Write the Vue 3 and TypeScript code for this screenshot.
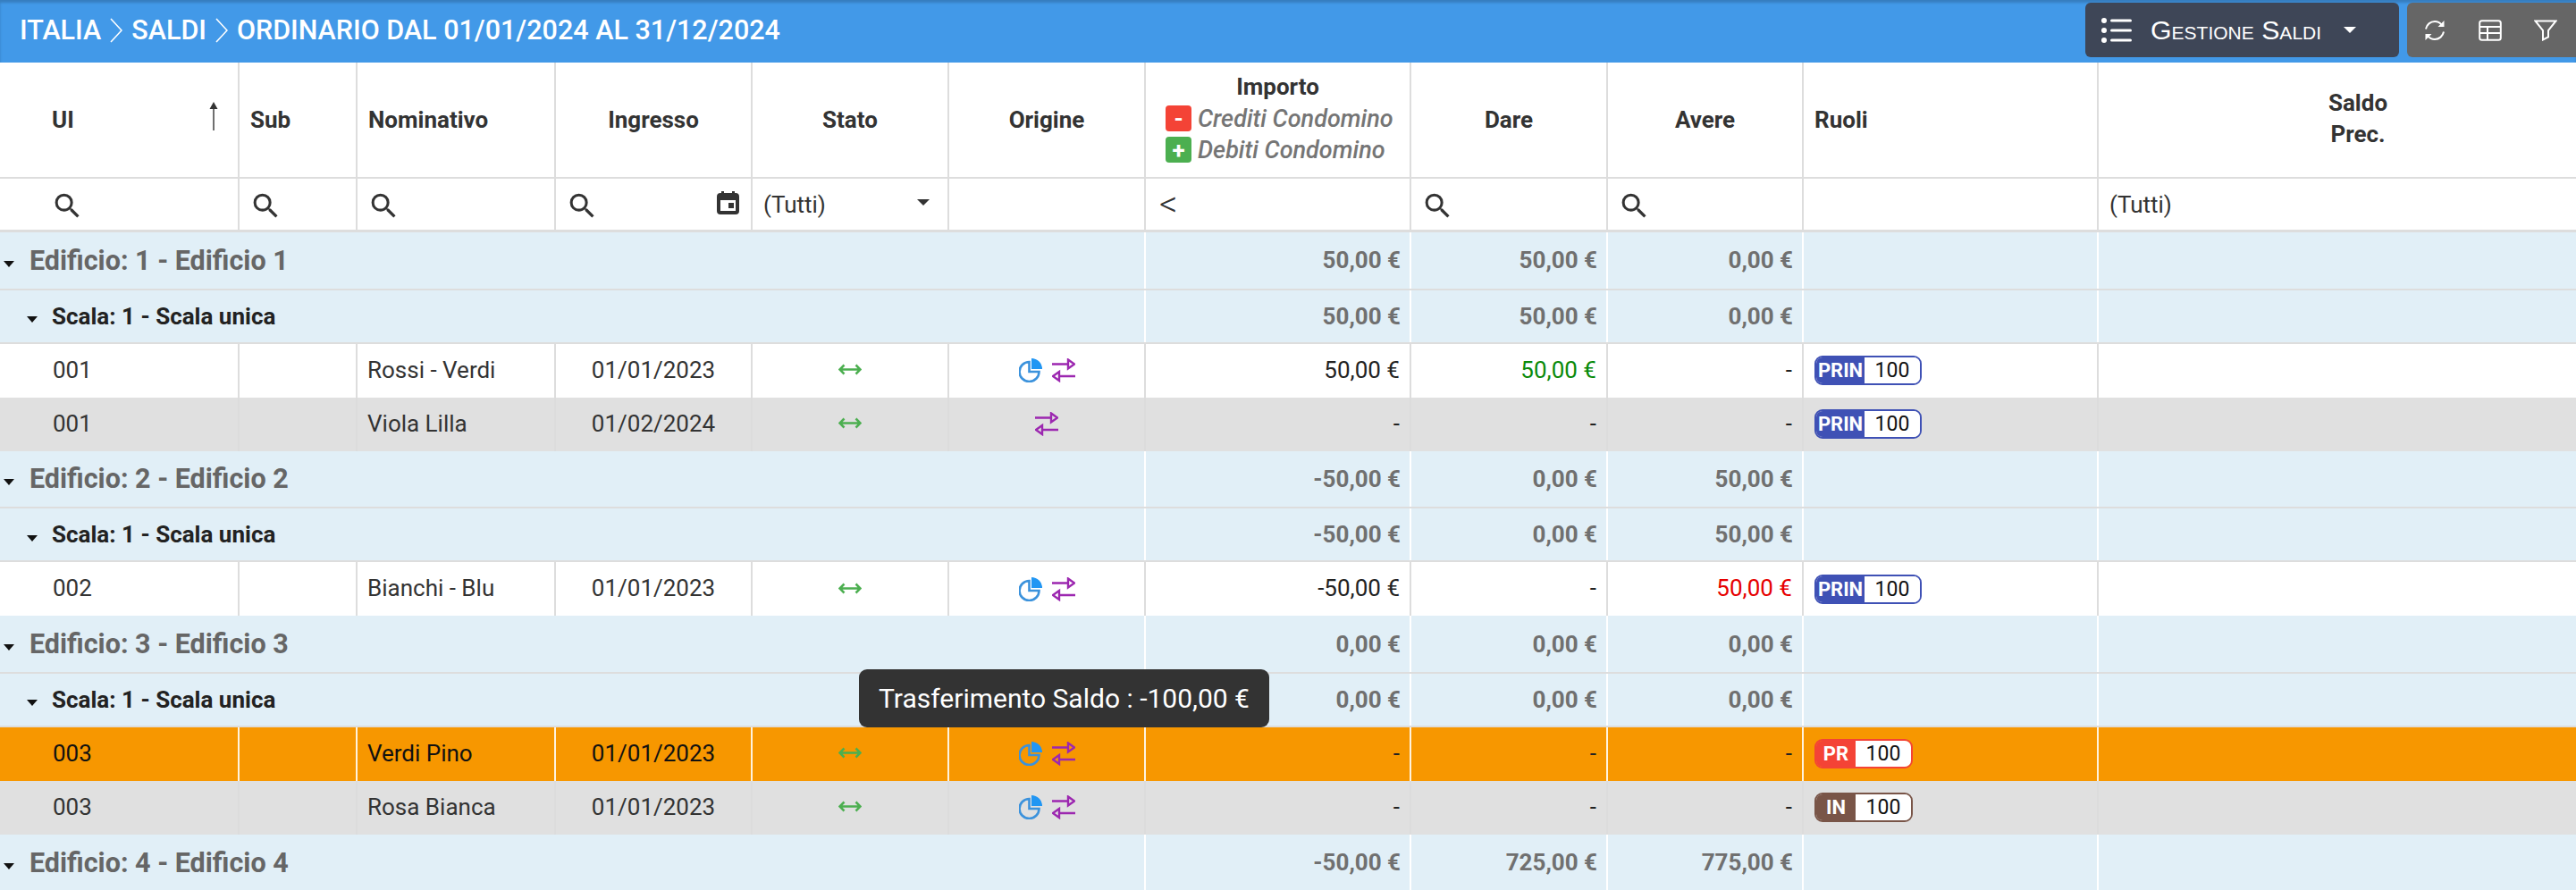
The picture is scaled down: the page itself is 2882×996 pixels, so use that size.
<script setup lang="ts">
type Kind = 'ed' | 'sc' | 'data'
interface Row {
  kind: Kind
  label?: string
  ui?: string
  name?: string
  date?: string
  tone?: 'white' | 'grey' | 'orange'
  pie?: boolean
  imp: string
  dare: string
  avere: string
  dareTone?: string
  avereTone?: string
  role?: string
  roleTone?: string
}

const SEARCH = 'M15.5 14h-.79l-.28-.27A6.471 6.471 0 0 0 16 9.5 6.5 6.5 0 1 0 9.5 16c1.61 0 3.09-.59 4.23-1.57l.27.28v.79l5 4.99L20.49 19l-4.99-5zm-6 0C7.01 14 5 11.99 5 9.5S7.01 5 9.5 5 14 7.01 14 9.5 11.99 14 9.5 14z'

const rows: Row[] = [
  { kind: 'ed', label: 'Edificio: 1 - Edificio 1', imp: '50,00 €', dare: '50,00 €', avere: '0,00 €' },
  { kind: 'sc', label: 'Scala: 1 - Scala unica', imp: '50,00 €', dare: '50,00 €', avere: '0,00 €' },
  { kind: 'data', ui: '001', name: 'Rossi - Verdi', date: '01/01/2023', tone: 'white', pie: true, imp: '50,00 €', dare: '50,00 €', avere: '-', dareTone: 'green', role: 'PRIN', roleTone: 'indigo' },
  { kind: 'data', ui: '001', name: 'Viola Lilla', date: '01/02/2024', tone: 'grey', pie: false, imp: '-', dare: '-', avere: '-', role: 'PRIN', roleTone: 'indigo' },
  { kind: 'ed', label: 'Edificio: 2 - Edificio 2', imp: '-50,00 €', dare: '0,00 €', avere: '50,00 €' },
  { kind: 'sc', label: 'Scala: 1 - Scala unica', imp: '-50,00 €', dare: '0,00 €', avere: '50,00 €' },
  { kind: 'data', ui: '002', name: 'Bianchi - Blu', date: '01/01/2023', tone: 'white', pie: true, imp: '-50,00 €', dare: '-', avere: '50,00 €', avereTone: 'red', role: 'PRIN', roleTone: 'indigo' },
  { kind: 'ed', label: 'Edificio: 3 - Edificio 3', imp: '0,00 €', dare: '0,00 €', avere: '0,00 €' },
  { kind: 'sc', label: 'Scala: 1 - Scala unica', imp: '0,00 €', dare: '0,00 €', avere: '0,00 €' },
  { kind: 'data', ui: '003', name: 'Verdi Pino', date: '01/01/2023', tone: 'orange', pie: true, imp: '-', dare: '-', avere: '-', role: 'PR', roleTone: 'red' },
  { kind: 'data', ui: '003', name: 'Rosa Bianca', date: '01/01/2023', tone: 'grey', pie: true, imp: '-', dare: '-', avere: '-', role: 'IN', roleTone: 'brown' },
  { kind: 'ed', label: 'Edificio: 4 - Edificio 4', imp: '-50,00 €', dare: '725,00 €', avere: '775,00 €' },
]
</script>

<template>
  <div class="page">
    <header class="topbar">
      <div class="crumbs">
        <span>ITALIA</span>
        <svg class="chev" viewBox="0 0 14 28"><path d="M1 1l12 13L1 27" /></svg>
        <span>SALDI</span>
        <svg class="chev" viewBox="0 0 14 28"><path d="M1 1l12 13L1 27" /></svg>
        <span>ORDINARIO DAL 01/01/2024 AL 31/12/2024</span>
      </div>
      <div class="actions">
        <div class="manage">
          <svg class="list-ic" viewBox="0 0 34 28">
            <circle cx="3" cy="3" r="3" /><circle cx="3" cy="14" r="3" /><circle cx="3" cy="25" r="3" />
            <rect x="10" y="1.5" width="24" height="3" rx="1.5" /><rect x="10" y="12.5" width="24" height="3" rx="1.5" /><rect x="10" y="23.5" width="24" height="3" rx="1.5" />
          </svg>
          <span class="manage-text">Gestione Saldi</span>
          <span class="caret-white"></span>
        </div>
        <div class="tools">
          <svg class="tool" viewBox="0 0 26 24">
            <path d="M3 10.5C4 5.5 8 2 13 2c3.200 0 5.800 1.400 7.500 3.600M23 13.500C22 18.500 18 22 13 22c-3.200 0-5.800-1.400-7.500-3.600" />
            <path class="solid" d="M23.500 1v7h-7zM2.500 23v-7h7z" />
          </svg>
          <svg class="tool" viewBox="0 0 26 24">
            <rect x="1.200" y="1.200" width="23.600" height="21.600" rx="2.500" />
            <path d="M1 8h24M1 15h24M10 8v15" />
          </svg>
          <svg class="tool" viewBox="0 0 26 24">
            <path d="M1.500 1.500h23L16 12v7.500l-6 3V12z" />
          </svg>
        </div>
      </div>
    </header>

    <div class="row head">
      <div class="c first-head">UI
        <svg class="sort" viewBox="0 0 10 32"><path d="M5 0l4.500 8h-3.800v24H4.300V8H.5z" /></svg>
      </div>
      <div class="c left">Sub</div>
      <div class="c left">Nominativo</div>
      <div class="c mid">Ingresso</div>
      <div class="c mid">Stato</div>
      <div class="c mid">Origine</div>
      <div class="c importo">
        <div class="imp-title">Importo</div>
        <div class="imp-line"><span class="box box-red">-</span><em>Crediti Condomino</em></div>
        <div class="imp-line"><span class="box box-green">+</span><em>Debiti Condomino</em></div>
      </div>
      <div class="c mid">Dare</div>
      <div class="c mid">Avere</div>
      <div class="c left">Ruoli</div>
      <div class="c mid two">Saldo<br />Prec.</div>
    </div>

    <div class="row filters">
      <div class="c f-ui"><svg class="search" viewBox="0 0 24 24"><path :d="SEARCH" /></svg></div>
      <div class="c f-sm"><svg class="search" viewBox="0 0 24 24"><path :d="SEARCH" /></svg></div>
      <div class="c f-sm"><svg class="search" viewBox="0 0 24 24"><path :d="SEARCH" /></svg></div>
      <div class="c f-sm f-date">
        <svg class="search" viewBox="0 0 24 24"><path :d="SEARCH" /></svg>
        <svg class="cal" viewBox="0 0 25 26">
          <path d="M5 0h3v2h9V0h3v2h1a4 4 0 0 1 4 4v16a4 4 0 0 1-4 4H4a4 4 0 0 1-4-4V6a4 4 0 0 1 4-4h1z" />
          <rect class="cal-in" x="4" y="10" width="17" height="12" /><rect x="13" y="13" width="6" height="6" />
        </svg>
      </div>
      <div class="c f-sel">(Tutti)<span class="caret-dark"></span></div>
      <div class="c"></div>
      <div class="c f-lt">&lt;</div>
      <div class="c f-sm"><svg class="search" viewBox="0 0 24 24"><path :d="SEARCH" /></svg></div>
      <div class="c f-sm"><svg class="search" viewBox="0 0 24 24"><path :d="SEARCH" /></svg></div>
      <div class="c"></div>
      <div class="c f-sel">(Tutti)</div>
    </div>
    <div class="head-rule"></div>

    <template v-for="(r, i) in rows" :key="i">
      <div v-if="r.kind !== 'data'" class="row group" :class="r.kind">
        <div class="c g-label">
          <span class="caret-tiny"></span>
          <span class="g-text">{{ r.label }}</span>
        </div>
        <div class="c g-num">{{ r.imp }}</div>
        <div class="c g-num">{{ r.dare }}</div>
        <div class="c g-num">{{ r.avere }}</div>
        <div class="c"></div>
        <div class="c"></div>
      </div>
      <div v-else class="row data" :class="r.tone">
        <div class="c d-ui">{{ r.ui }}</div>
        <div class="c"></div>
        <div class="c left-d">{{ r.name }}</div>
        <div class="c mid-d">{{ r.date }}</div>
        <div class="c mid-d">
          <svg class="lr" viewBox="0 0 26 13"><path d="M1.500 6.500h23M6.500 1.500l-5 5 5 5M19.500 1.500l5 5-5 5" /></svg>
        </div>
        <div class="c mid-d origin">
          <svg v-if="r.pie" class="pie" viewBox="0 0 26 27">
            <path class="pie-o" d="M11.500 4a11 11 0 1 0 11 11H11.500z" />
            <path class="pie-f" d="M14 0a12 12 0 0 1 12 12H14z" />
          </svg>
          <svg class="swap" viewBox="0 0 26 27">
            <path d="M0 6.500h18M18 1.500l7 5-7 5zM26 20H8M8 15l-7 5 7 5z" />
          </svg>
        </div>
        <div class="c num">{{ r.imp }}</div>
        <div class="c num" :class="r.dareTone">{{ r.dare }}</div>
        <div class="c num" :class="r.avereTone">{{ r.avere }}</div>
        <div class="c chip-cell">
          <div class="chip" :class="r.roleTone">
            <span class="chip-l">{{ r.role }}</span>
            <span class="chip-r">100</span>
          </div>
        </div>
        <div class="c"></div>
      </div>
    </template>

    <div class="tooltip">Trasferimento Saldo : -100,00 €</div>
  </div>
</template>

<style scoped>
.page {
  position: relative;
  width: 2882px;
  height: 996px;
  overflow: hidden;
  background: #fff;
  font-family: Roboto, "Liberation Sans", sans-serif;
  color: #333;
}

.topbar {
  display: flex;
  justify-content: space-between;
  align-items: flex-start;
  height: 70px;
  padding-top: 3px;
  box-sizing: border-box;
  background: #4299e8;
  box-shadow: inset 0 3px 3px rgba(0, 0, 0, 0.18);
}
.crumbs {
  display: flex;
  align-items: center;
  height: 61px;
  padding-left: 22px;
  color: #fff;
  font-size: 30.5px;
  font-weight: 500;
}
.chev {
  width: 14px;
  height: 28px;
  margin: 0 10px;
  fill: none;
  stroke: #fff;
  stroke-width: 1.6;
}
.actions {
  display: flex;
  gap: 9px;
}
.manage {
  display: flex;
  align-items: center;
  width: 351px;
  height: 61px;
  box-sizing: border-box;
  padding-left: 18px;
  background: #3e4657;
  border-radius: 6px;
  color: #fff;
}
.list-ic {
  width: 34px;
  height: 28px;
  fill: #fff;
  flex: none;
}
.manage-text {
  margin-left: 21px;
  font-family: "Liberation Sans", Arial, sans-serif;
  font-size: 30.3px;
  font-variant: small-caps;
}
.caret-white {
  margin-left: 25px;
  border-left: 7px solid transparent;
  border-right: 7px solid transparent;
  border-top: 7px solid #fff;
}
.tools {
  display: flex;
  align-items: center;
  gap: 36px;
  width: 189px;
  height: 61px;
  box-sizing: border-box;
  padding-left: 18px;
  background: #666;
  border-radius: 6px 0 0 6px;
}
.tool {
  width: 26px;
  height: 24px;
  fill: none;
  stroke: #fff;
  stroke-width: 2;
}
.tool .solid {
  fill: #fff;
  stroke: none;
}

.row {
  display: grid;
  grid-template-columns: 268px 132px 222px 220px 220px 220px 297px 220px 219px 330px 1fr;
}
.c {
  box-sizing: border-box;
  border-right: 2px solid #ddd;
  min-width: 0;
}
.c:last-child {
  border-right: 0;
}

.head {
  height: 130px;
  border-bottom: 2px solid #ddd;
  box-sizing: border-box;
  font-size: 26px;
  font-weight: 700;
  color: #333;
}
.head .c {
  display: flex;
  align-items: center;
}
.first-head {
  padding-left: 58px;
  position: relative;
}
.sort {
  position: absolute;
  left: 234px;
  top: 44px;
  width: 10px;
  height: 32px;
  fill: #333;
}
.left {
  padding-left: 12px;
}
.mid {
  justify-content: center;
  text-align: center;
}
.head .two {
  line-height: 35px;
  padding: 0 0 2px 46px;
}
.head .importo {
  display: block;
  padding: 10px 0 0 22px;
  position: relative;
}
.imp-title {
  height: 35px;
  line-height: 35px;
  text-align: center;
  padding-right: 22px;
}
.imp-line {
  display: flex;
  align-items: center;
  gap: 7px;
  height: 35px;
  font-weight: 500;
  color: #757575;
}
.imp-line em {
  font-size: 27px;
  font-style: italic;
  font-weight: 500;
}
.box {
  display: flex;
  align-items: center;
  justify-content: center;
  width: 29px;
  height: 29px;
  border-radius: 4px;
  color: #fff;
  font-size: 26px;
  font-weight: 700;
  font-style: normal;
}
.box-red { background: #f44336; }
.box-green { background: #4caf50; }

.filters {
  height: 57px;
  font-size: 26px;
  color: #333;
}
.filters .c {
  display: flex;
  align-items: center;
  position: relative;
}
.search {
  width: 37px;
  height: 37px;
  fill: #333;
  flex: none;
  margin-top: 3px;
}
.f-ui { padding-left: 57px; }
.f-sm { padding-left: 11px; }
.f-date { justify-content: space-between; padding-right: 13px; }
.cal {
  width: 25px;
  height: 26px;
  fill: #333;
  margin-top: -4px;
}
.cal-in { fill: #fff; }
.f-sel { padding-left: 12px; }
.caret-dark {
  position: absolute;
  right: 20px;
  top: 23px;
  border-left: 7px solid transparent;
  border-right: 7px solid transparent;
  border-top: 7px solid #333;
}
.f-lt {
  padding-left: 15px;
  font-size: 40px;
  font-weight: 300;
}
.head-rule {
  height: 3px;
  background: #ddd;
}

.group {
  background: #e1eff7;
  grid-template-columns: 1282px 297px 220px 219px 330px 1fr;
  box-sizing: border-box;
  border-bottom: 2px solid #ddd;
}
.group .c {
  border-right: 2px solid #fff;
  display: flex;
  align-items: center;
}
.group .c:last-child { border-right: 0; }
.ed { height: 64.67px; }
.sc { height: 60px; }
.g-label { border-right: 2px solid #fff; }
.ed .g-label { padding-left: 4px; }
.sc .g-label { padding-left: 30px; }
.caret-tiny {
  flex: none;
  margin-top: 8px;
  border-left: 6px solid transparent;
  border-right: 6px solid transparent;
  border-top: 7px solid #111;
}
.g-text { font-weight: 700; }
.ed .g-text {
  margin-left: 17px;
  font-size: 30.5px;
  color: #666;
}
.sc .g-text {
  margin-left: 16px;
  font-size: 26px;
  color: #222;
}
.g-num {
  justify-content: flex-end;
  padding-right: 10px;
  font-size: 26px;
  font-weight: 700;
  color: #707070;
}

.data {
  height: 60px;
  font-size: 26px;
  color: #333;
}
.data .c {
  display: flex;
  align-items: center;
}
.data.white { background: #fff; }
.data.grey { background: #e0e0e0; }
.data.grey .c { border-right-color: #dcdcdc; }
.data.orange { background: #f79700; color: #111; }
.data.orange .c { border-right-color: #fff3de; }
.data .c:last-child { border-right: 0; }
.d-ui { padding: 0 0 2px 59px; }
.left-d { padding: 0 0 2px 11px; }
.mid-d { justify-content: center; }
.mid-d:not(.origin) { padding-bottom: 2px; }
.origin { gap: 11px; }
.lr {
  width: 26px;
  height: 13px;
  fill: none;
  stroke: #4caf50;
  stroke-width: 2.500;
}
.pie {
  width: 26px;
  height: 27px;
}
.pie-o {
  fill: none;
  stroke: #3b92dc;
  stroke-width: 2.600;
}
.pie-f { fill: #2196f3; }
.swap {
  width: 26px;
  height: 27px;
  fill: none;
  stroke: #9c27b0;
  stroke-width: 2.400;
}
.num {
  justify-content: flex-end;
  padding: 0 11px 2px 0;
  color: #222;
}
.num.green { color: #0a8a0a; }
.num.red { color: #e60000; }
.chip-cell { padding-left: 12px; }
.chip {
  display: flex;
  height: 33px;
  box-sizing: border-box;
  border: 2px solid;
  border-radius: 9px;
  overflow: hidden;
  font-size: 23px;
  line-height: 29px;
}
.chip-l {
  color: #fff;
  font-weight: 700;
  font-size: 22px;
  text-align: center;
}
.chip-r {
  background: #fff;
  color: #111;
  text-align: center;
  width: 62px;
}
.chip.indigo { border-color: #3f51b5; }
.chip.indigo .chip-l { background: #3f51b5; width: 54px; }
.chip.red { border-color: #f44336; }
.chip.red .chip-l { background: #f44336; width: 44px; }
.chip.brown { border-color: #795548; }
.chip.brown .chip-l { background: #795548; width: 44px; }

.tooltip {
  position: absolute;
  left: 961px;
  top: 749px;
  width: 459px;
  height: 65px;
  display: flex;
  align-items: center;
  justify-content: center;
  background: #333;
  border-radius: 9px;
  color: #fff;
  font-size: 30px;
}
</style>
